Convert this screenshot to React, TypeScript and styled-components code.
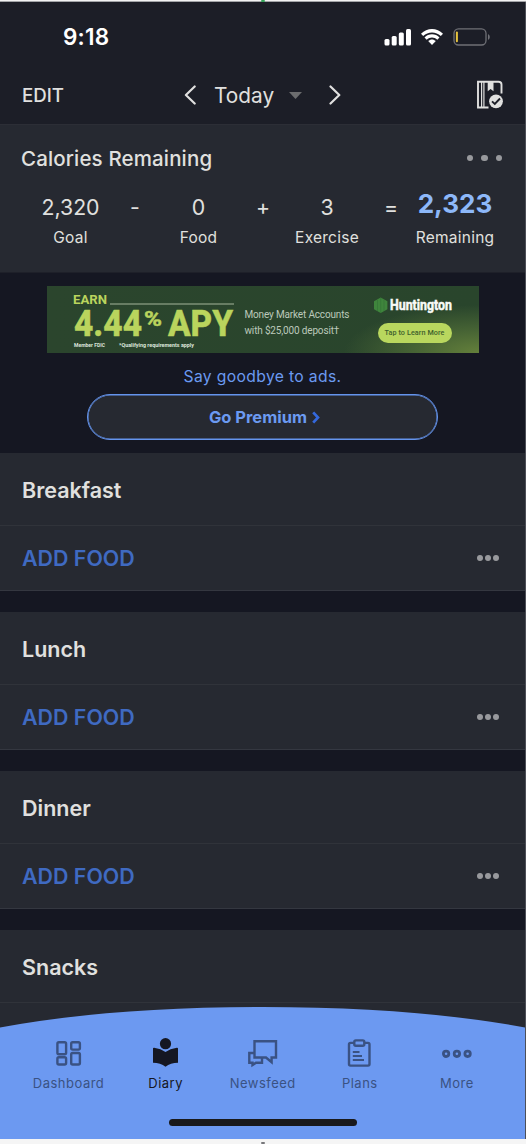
import React from 'react';
import styled, { createGlobalStyle } from 'styled-components';

const Global = createGlobalStyle`
  * { box-sizing: border-box; }
  html, body { margin: 0; padding: 0; background: #f5f5f5; }
  body { font-family: Inter, "Liberation Sans", sans-serif; overflow: hidden; }
  button { font: inherit; color: inherit; background: none; border: 0; padding: 0; display: flex; }
`;

const Frame = styled.div`
  width: 526px;
  height: 1144px;
  display: flex;
  flex-direction: column;
  position: relative;
  overflow: hidden;
`;
const TopEdge = styled.div`
  height: 2px;
  flex: none;
  display: flex;
  justify-content: center;
  background: linear-gradient(#f3f3f3 50%, #a4a5a8 50%);
`;
const BottomEdge = styled.div`
  height: 5px;
  flex: none;
  display: flex;
  justify-content: center;
  align-items: flex-end;
  background: #f5f5f5;
`;
const EdgeMark = styled.i<{ $color: string }>`
  width: 4px;
  height: 2px;
  background: ${(p) => p.$color};
  border-radius: 1px;
`;
const Screen = styled.div`
  height: 1137px;
  flex: none;
  display: flex;
  flex-direction: column;
  background: #151722;
  color: #e0e0df;
  border-right: 1px solid #4d4f57;
`;

const StatusBar = styled.div`
  height: 68px;
  flex: none;
  display: flex;
  justify-content: space-between;
  padding: 0 34px 0 63px;
  background: #1c1e27;
  color: #fff;
`;
const Clock = styled.div`
  font-size: 22.5px;
  font-weight: 600;
  line-height: 28px;
  padding-top: 21px;
  letter-spacing: 0.2px;
`;
const StatusIcons = styled.svg`
  width: 108px;
  height: 20px;
  margin-top: 23.5px;
`;

const DateBar = styled.div`
  height: 55px;
  flex: none;
  display: grid;
  grid-template-columns: 162px 1fr 163px;
  align-items: center;
  padding: 0 23px 4px 22px;
  background: #1c1e27;
  border-bottom: 1px solid #2c2e36;
`;
const Edit = styled.button`
  font-size: 18.7px;
  font-weight: 500;
  line-height: 24px;
  padding-top: 1px;
`;
const DateNav = styled.div`
  display: flex;
  align-items: center;
`;
const DateLabel = styled.span`
  width: 60px;
  margin-left: 18px;
  padding-top: 2px;
  font-size: 20.8px;
  line-height: 26px;
  white-space: nowrap;
`;
const CaretSvg = styled.svg`
  margin: 0 27px 0 15px;
`;
const DoneButton = styled.button`
  justify-self: end;
`;

const Summary = styled.section`
  height: 148px;
  flex: none;
  display: flex;
  flex-direction: column;
  background: #262931;
  border-bottom: 1px solid #1e2029;
`;
const SummaryHead = styled.div`
  height: 66px;
  display: flex;
  align-items: center;
  justify-content: space-between;
  padding: 0 23px 0 21px;
`;
const SummaryTitle = styled.h2`
  margin: 0;
  font-size: 20.5px;
  font-weight: 500;
  line-height: 26px;
  letter-spacing: 0.14px;
  padding-top: 2px;
`;
const Equation = styled.div`
  display: grid;
  grid-template-columns: 85px 44px 83px 46px 82px 46px 82px;
  padding-left: 28px;
  text-align: center;
`;
const Figure = styled.div<{ $strong?: boolean }>`
  height: 32px;
  line-height: 30px;
  font-size: ${(p) => (p.$strong ? 26.1 : 21.3)}px;
  font-weight: ${(p) => (p.$strong ? 700 : 400)};
  color: ${(p) => (p.$strong ? '#8db8f9' : '#e0e0df')};
  position: relative;
  top: ${(p) => (p.$strong ? -2 : 1)}px;
  white-space: nowrap;
`;
const FigureLabel = styled.div`
  font-size: 15.5px;
  line-height: 20px;
  letter-spacing: 0.25px;
  padding-top: 5px;
  display: flex;
  justify-content: center;
`;

const Promo = styled.section`
  height: 180px;
  flex: none;
  display: flex;
  flex-direction: column;
  align-items: center;
  padding-top: 13px;
`;
const Banner = styled.div`
  width: 432px;
  height: 67px;
  flex: none;
  display: flex;
  background: radial-gradient(ellipse 135px 48px at 100% 100%, #64803b 0%, #456234 50%, transparent 100%),
    linear-gradient(90deg, #2b452d, #29452c);
`;
const Rate = styled.svg`
  width: 190px;
  height: 67px;
  flex: none;
`;
const Offer = styled.p`
  width: 137px;
  margin: 0;
  padding: 21px 0 0 8px;
  font: 10px/16px "Roboto", sans-serif;
  letter-spacing: -0.16px;
  color: #bcc9bb;
  white-space: nowrap;
`;
const Sponsor = styled.div`
  width: 82px;
  padding-top: 10px;
  display: flex;
  flex-direction: column;
`;
const BrandMark = styled.svg`
  flex: none;
  overflow: visible;
`;
const LearnMore = styled.button`
  margin: 9px 0 0 4px;
  width: 74px;
  height: 20px;
  border-radius: 10px;
  background: #b9d75e;
  color: #3d602c;
  font: 500 7.2px/20px "Roboto", sans-serif;
  letter-spacing: 0.1px;
  justify-content: center;
  white-space: nowrap;
`;
const Goodbye = styled.div`
  margin-top: 14px;
  font-size: 15.7px;
  line-height: 20px;
  letter-spacing: 0.35px;
  color: #6b9af1;
`;
const Premium = styled.button`
  margin-top: 7px;
  width: 351px;
  height: 46px;
  padding-left: 4px;
  border: 1.5px solid #6494ed;
  box-shadow: inset 0 0 0 0.5px #6494ed;
  border-radius: 23px;
  background: #262931;
  color: #6b9af1;
  align-items: center;
  justify-content: center;
  gap: 5px;
  font-size: 16.5px;
  font-weight: 700;
`;

const Meal = styled.section`
  height: 138px;
  flex: none;
  margin-bottom: 21px;
  background: #262931;
  border-bottom: 1px solid #343740;
`;
const MealName = styled.h3`
  margin: 0;
  height: 73px;
  padding: 1px 22px 0;
  line-height: 73px;
  font-size: 21.5px;
  font-weight: 600;
  border-bottom: 1px solid #30333a;
`;
const MealActions = styled.div`
  height: 64px;
  display: flex;
  align-items: center;
  justify-content: space-between;
  padding: 0 26px 0 22px;
`;
const AddFood = styled.button`
  font-size: 21.4px;
  font-weight: 600;
  line-height: 26px;
  color: #3f6ac2;
`;
const DotRow = styled.button<{ $gap: number; $size: number }>`
  gap: ${(p) => p.$gap}px;
  i {
    width: ${(p) => p.$size}px;
    height: ${(p) => p.$size}px;
    border-radius: 50%;
    background: #98999d;
  }
`;

const TabBar = styled.nav`
  position: absolute;
  left: 0;
  bottom: 5px;
  width: 525px;
  height: 132px;
`;
const Curve = styled.svg`
  position: absolute;
  inset: 0;
`;
const Tabs = styled.div`
  position: relative;
  display: grid;
  grid-template-columns: repeat(5, 97.1px);
  padding: 29px 0 0 20px;
`;
const Tab = styled.button<{ $active?: boolean }>`
  flex-direction: column;
  align-items: center;
  color: ${(p) => (p.$active ? '#151722' : '#3a5283')};
  font-size: 13px;
  line-height: 18px;
  letter-spacing: 0.5px;
  svg { display: block; margin: 0 0 6px -1px; }
`;
const HomeBar = styled.div`
  position: relative;
  width: 188px;
  height: 7px;
  margin: 27px 0 0 169px;
  border-radius: 4px;
  background: #19191b;
`;

const Dots = ({ gap, size }: { gap: number; size: number }) => (
  <DotRow $gap={gap} $size={size} aria-label="Options"><i /><i /><i /></DotRow>
);

const Chevron = ({ flip }: { flip?: boolean }) => (
  <svg width="12" height="20" viewBox="0 0 12 20" fill="none" stroke="#e0e0df" strokeWidth="2.2" strokeLinecap="round" strokeLinejoin="round">
    <path d={flip ? 'M1.500 1.500 10.300 10 1.500 18.500' : 'M10.700 1.500 1.900 10 10.700 18.500'} />
  </svg>
);

const icon = (children: React.ReactNode) => (
  <svg width="32" height="32" viewBox="0 0 32 32" fill="none" stroke="currentColor" strokeWidth="2.4" strokeLinejoin="round">{children}</svg>
);

const tabs = [
  { name: 'Dashboard', art: icon(<g transform="translate(.8 -.3)"><rect x="4.600" y="6.600" width="8.700" height="12" rx="1.500" /><rect x="18.400" y="6.600" width="8.700" height="7.300" rx="1.500" /><rect x="4.600" y="21.600" width="8.700" height="7.200" rx="1.500" /><rect x="18.400" y="17.300" width="8.700" height="11.500" rx="1.500" /></g>) },
  { name: 'Diary', active: true, art: icon(<g fill="currentColor" stroke="none"><circle cx="16.500" cy="7.700" r="5.600" /><path d="M4 12.600Q4 11.600 5.100 11.700 12 12.600 16.500 16 21 12.600 27.900 11.700 29 11.600 29 12.600V26.800Q21.500 27 16.500 30.800 11.500 27 4 26.800Z" /></g>) },
  { name: 'Newsfeed', art: icon(<g strokeLinejoin="miter"><path d="M8.500 5.300H30V21.500H25.600V26.200L20 21.500H8.500Z" /><path d="M8.500 17H3.300V26.700H6.500V29L10 26.700H16V21.500" /></g>) },
  { name: 'Plans', art: icon(<><rect x="6" y="6.900" width="20.500" height="22.700" rx="1.500" /><rect x="11.300" y="4.400" width="10" height="5.300" rx="1.500" fill="#6c99f1" /><path d="M9.800 15.900h6.700M9.800 19.900h9.200M9.800 24h11.200" strokeWidth="2" /></>) },
  { name: 'More', art: icon(<g strokeWidth="2.800" transform="translate(.4 0)"><circle cx="5.700" cy="17.800" r="2.700" /><circle cx="16.500" cy="17.800" r="2.700" /><circle cx="27.200" cy="17.800" r="2.700" /></g>) },
];

const figures = [
  ['2,320', 'Goal'], ['-'], ['0', 'Food'], ['+'], ['3', 'Exercise'], ['='], ['2,323', 'Remaining'],
];

export default function App() {
  return (
    <Frame>
      <Global />
      <TopEdge><EdgeMark $color="#35a45a" /></TopEdge>
      <Screen>
        <StatusBar>
          <Clock>9:18</Clock>
          <StatusIcons viewBox="0 0 108 20" fill="#fff">
            <rect x="1.500" y="13" width="5" height="6.500" rx="1.500" /><rect x="8.700" y="10" width="5" height="9.500" rx="1.500" /><rect x="15.800" y="6.500" width="5" height="13" rx="1.500" /><rect x="23" y="3" width="5" height="16.500" rx="1.500" />
            <g transform="translate(0 1.800)"><path d="M38 5.900C44-.4 54-.4 60 5.900L57.800 8.200C53 3.500 45 3.500 40.200 8.200Z" /><path d="M41.500 9.600C45.500 5.400 52.500 5.400 56.500 9.600L54.300 12C51 8.800 47 8.800 43.700 12Z" /><path d="M45.200 13.200C47.500 11.100 50.500 11.100 52.800 13.200L49 17.200Z" /></g>
            <rect x="71" y="2.800" width="32" height="16.200" rx="4.500" fill="none" stroke="#6f7076" strokeWidth="1.300" />
            <path d="M105 8.100q1.800 1 1.800 3t-1.800 3Z" fill="#6f7076" /><rect x="72.900" y="5.500" width="2" height="10.800" rx="1" fill="#e6c33e" />
          </StatusIcons>
        </StatusBar>
        <DateBar>
          <Edit>EDIT</Edit>
          <DateNav>
            <button aria-label="Previous day"><Chevron /></button>
            <DateLabel>Today</DateLabel>
            <CaretSvg width="13" height="7"><path d="M0 0h13L6.500 7Z" fill="#6b6c6e" /></CaretSvg>
            <button aria-label="Next day"><Chevron flip /></button>
          </DateNav>
          <DoneButton aria-label="Complete diary">
            <svg width="28" height="30" viewBox="0 0 28 30" fill="none" stroke="#e0e0df" strokeWidth="1.900">
              <path d="M12.500 27.500H2V1.800H22.500Q25.500 1.800 25.500 4.500V13.500" /><path d="M5.600 2V27.500M7.900 2V27.500" strokeWidth="1.200" />
              <path d="M11.700 2H17.500V11.200L14.600 9 11.700 11.200Z" fill="#e0e0df" stroke="none" />
              <circle cx="20" cy="21.300" r="6.900" fill="#e0e0df" stroke="none" /><path d="M16 21.400 18.800 24 24 18.500" stroke="#1c1e27" />
            </svg>
          </DoneButton>
        </DateBar>
        <Summary>
          <SummaryHead><SummaryTitle>Calories Remaining</SummaryTitle><Dots gap={8} size={6.3} /></SummaryHead>
          <Equation>
            {figures.map(([value, label]) => (
              <div key={value + label}>
                <Figure $strong={label === 'Remaining'}>{value}</Figure>
                {label && <FigureLabel>{label}</FigureLabel>}
              </div>
            ))}
          </Equation>
        </Summary>
        <Promo>
          <Banner>
            <Rate viewBox="0 0 190 67" fontFamily="Roboto, sans-serif" fill="#bad45d">
              <text x="26" y="18" fontSize="13.500" fontWeight="700" textLength="34" lengthAdjust="spacingAndGlyphs">EARN</text>
              <path d="M63 18H187" stroke="#a5b69b" strokeWidth="1" />
              <g fontWeight="800" stroke="#bad45d" strokeWidth=".5"><text x="27" y="50" fontSize="36" textLength="68" lengthAdjust="spacingAndGlyphs">4.44</text>
              <text x="97" y="39.500" fontSize="21" fontWeight="700" textLength="18" lengthAdjust="spacingAndGlyphs">%</text>
              <text x="121" y="50" fontSize="36" textLength="65" lengthAdjust="spacingAndGlyphs">APY</text></g>
              <g fill="#dce4da" fontSize="5" fontWeight="700"><text x="27" y="61" textLength="31" lengthAdjust="spacingAndGlyphs">Member FDIC</text><text x="72" y="61" textLength="75" lengthAdjust="spacingAndGlyphs">*Qualifying requirements apply</text></g>
            </Rate>
            <Offer>Money Market Accounts<br />with $25,000 deposit†</Offer>
            <Sponsor>
              <BrandMark width="80" height="18" viewBox="0 0 80 18">
                <path d="m6.700 1.500 6.700 3.800v8l-6.700 3.800-6.700-3.800v-8Z" fill="#3f853c" /><path d="M3.500 4v11M6.700 2v15M10 4v11" stroke="#347336" strokeWidth=".7" />
                <text x="16" y="13.500" fill="#f8faf7" stroke="#f8faf7" strokeWidth=".5" fontFamily="Roboto, sans-serif" fontWeight="700" fontSize="14" textLength="62" lengthAdjust="spacingAndGlyphs">Huntington</text>
              </BrandMark>
              <LearnMore>Tap to Learn More</LearnMore>
            </Sponsor>
          </Banner>
          <Goodbye>Say goodbye to ads.</Goodbye>
          <Premium>Go Premium<svg width="8" height="13" viewBox="0 0 8 13" fill="none" stroke="#3468dc" strokeWidth="2.700"><path d="M1.200 1.300 6 6.500 1.200 11.700" /></svg></Premium>
        </Promo>
        {['Breakfast', 'Lunch', 'Dinner', 'Snacks'].map((name) => (
          <Meal key={name}>
            <MealName>{name}</MealName>
            <MealActions><AddFood>ADD FOOD</AddFood><Dots gap={2.2} size={5.9} /></MealActions>
          </Meal>
        ))}
      </Screen>
      <TabBar>
        <Curve width="525" height="132"><path d="M0 20.500Q110 0 262.500 0T525 20.500V132H0Z" fill="#6c99f1" /></Curve>
        <Tabs>
          {tabs.map((t) => <Tab key={t.name} $active={t.active}>{t.art}{t.name}</Tab>)}
        </Tabs>
        <HomeBar />
      </TabBar>
      <BottomEdge><EdgeMark $color="#77777a" /></BottomEdge>
    </Frame>
  );
}
